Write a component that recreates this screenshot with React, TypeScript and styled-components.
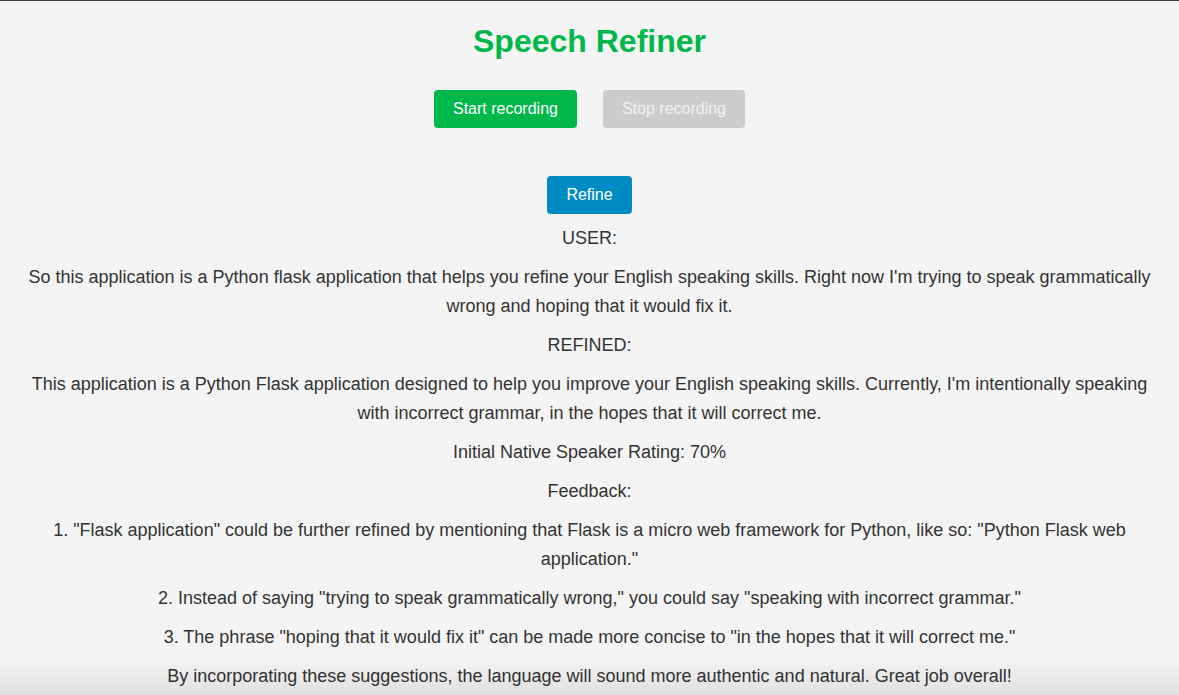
import React from 'react';
import styled, { createGlobalStyle } from 'styled-components';

const GlobalStyle = createGlobalStyle`
  html, body {
    margin: 0;
    padding: 0;
    background-color: #f4f4f4;
    font-family: 'Liberation Sans', Arial, sans-serif;
    color: #333;
  }
`;

const Container = styled.div`
  min-height: 695px;
  box-sizing: border-box;
  border-top: 1px solid #3c3c3c;
  padding: 0 20px;
  display: flex;
  flex-direction: column;
  align-items: center;
  text-align: center;
`;

const Title = styled.h1`
  font-size: 32px;
  font-weight: 700;
  color: #00b84a;
  margin: 22px 0 30px;
`;

const ButtonRow = styled.div`
  display: flex;
  gap: 26px;
  margin-bottom: 48px;
`;

const Button = styled.button<{ $variant: 'start' | 'stop' | 'refine' }>`
  height: 38px;
  padding: 0 19px;
  border: none;
  border-radius: 4px;
  font-family: inherit;
  font-size: 16px;
  color: ${(p) => (p.$variant === 'stop' ? '#f2f2f2' : '#fff')};
  background-color: ${(p) =>
    p.$variant === 'start' ? '#00b84a' : p.$variant === 'stop' ? '#cccccc' : '#008cc3'};
  cursor: ${(p) => (p.$variant === 'stop' ? 'default' : 'pointer')};
`;

const Output = styled.div`
  width: 100%;
`;

const Line = styled.p`
  font-size: 18px;
  line-height: 29px;
  margin: 10px 0;
`;

const BottomShade = styled.div`
  position: fixed;
  left: 0;
  right: 0;
  bottom: 0;
  height: 36px;
  pointer-events: none;
  background: linear-gradient(to bottom, rgba(0, 0, 0, 0), rgba(0, 0, 0, 0.08));
`;

const lines = [
  'USER:',
  "So this application is a Python flask application that helps you refine your English speaking skills. Right now I'm trying to speak grammatically wrong and hoping that it would fix it.",
  'REFINED:',
  "This application is a Python Flask application designed to help you improve your English speaking skills. Currently, I'm intentionally speaking with incorrect grammar, in the hopes that it will correct me.",
  'Initial Native Speaker Rating: 70%',
  'Feedback:',
  '1. "Flask application" could be further refined by mentioning that Flask is a micro web framework for Python, like so: "Python Flask web application."',
  '2. Instead of saying "trying to speak grammatically wrong," you could say "speaking with incorrect grammar."',
  '3. The phrase "hoping that it would fix it" can be made more concise to "in the hopes that it will correct me."',
  'By incorporating these suggestions, the language will sound more authentic and natural. Great job overall!',
];

export default function App() {
  return (
    <>
      <GlobalStyle />
      <Container>
        <Title>Speech Refiner</Title>
        <ButtonRow>
          <Button $variant="start">Start recording</Button>
          <Button $variant="stop" disabled>
            Stop recording
          </Button>
        </ButtonRow>
        <Button $variant="refine">Refine</Button>
        <Output>
          {lines.map((text, i) => (
            <Line key={i}>{text}</Line>
          ))}
        </Output>
      </Container>
      <BottomShade />
    </>
  );
}
